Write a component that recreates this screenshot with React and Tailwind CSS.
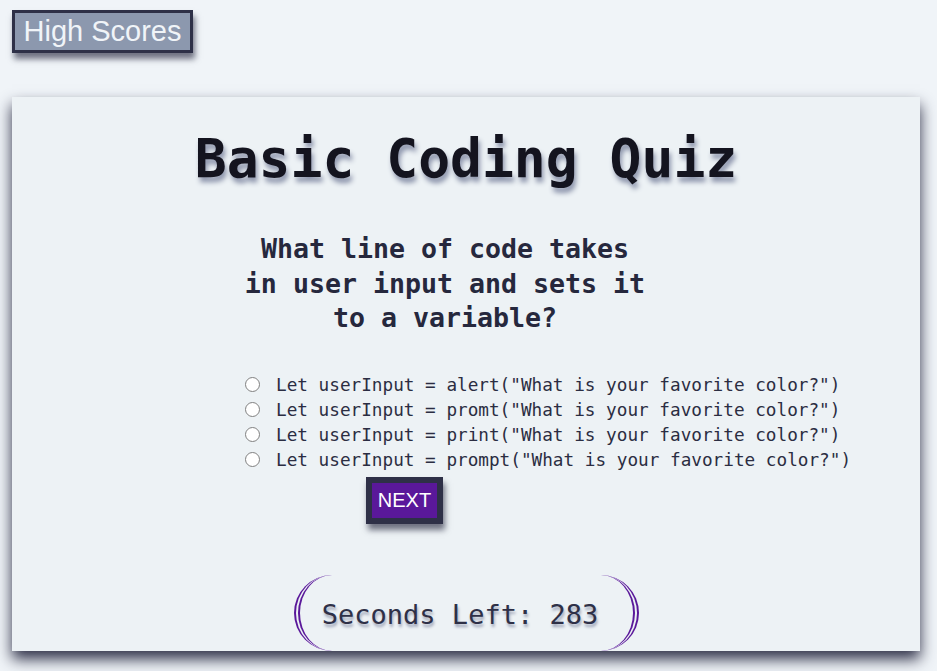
import { useState } from "react";

const options = [
  'Let userInput = alert("What is your favorite color?")',
  'Let userInput = promt("What is your favorite color?")',
  'Let userInput = print("What is your favorite color?")',
  'Let userInput = prompt("What is your favorite color?")',
];

export default function App() {
  const [selected, setSelected] = useState(null);

  return (
    <div className="min-h-screen bg-[#f0f4f8] pt-[10px] pl-[12px] pr-[17px] font-['DejaVu_Sans_Mono',monospace]">
      <button className="h-[43px] w-[181px] border-[3px] border-[#2e3047] bg-[#8c98ae] text-[29px] leading-[33px] text-[#f0f4f8] font-['Liberation_Sans',Arial,sans-serif] shadow-[2px_6px_6px_#2e3047aa]">
        High Scores
      </button>

      <div className="mt-[44px] h-[554px] bg-[#edf2f5] pt-[32px] shadow-[0_8px_14px_#2e3047]">
        <h1 className="text-center text-[53px] font-bold leading-[60px] text-[#14141f] [text-shadow:2px_5px_5px_#8e96ad]">
          Basic Coding Quiz
        </h1>

        <div className="pl-[221px] pt-[43px]">
          <h2 className="ml-[9px] w-[406px] text-center text-[26.6px] font-bold leading-[34.5px] text-[#26283d]">
            What line of code takes in user input and sets it to a variable?
          </h2>

          <div className="mt-[37px] pl-[12px]">
            {options.map((opt, idx) => (
              <label
                key={idx}
                className="flex h-[25px] items-center text-[17.7px] text-[#2b2d42]"
              >
                <input
                  type="radio"
                  name="answer"
                  checked={selected === idx}
                  onChange={() => setSelected(idx)}
                  className="mb-[2px] h-[15px] w-[15px] appearance-none rounded-full border border-[#808080] bg-white checked:border-[4px] checked:border-[#5a189a]"
                />
                <span className="ml-[16px]">{opt}</span>
              </label>
            ))}
          </div>

          <button className="ml-[133px] mt-[4px] h-[47px] w-[77px] border-[6px] border-[#2e3047] bg-[#5a189a] text-[20px] text-white font-['Liberation_Sans',Arial,sans-serif] shadow-[2px_6px_6px_#2e3047aa]">
            NEXT
          </button>
        </div>

        <div className="mt-[51px] flex justify-center">
          <div className="flex h-[76px] w-[345px] items-center justify-center rounded-full border-x-[6px] border-y-0 border-double border-[#5a189a] pr-[12px] pt-[5px] text-[27px] text-[#2e3047] [text-shadow:1px_3px_3px_#9aa1b5]">
            Seconds Left: 283
          </div>
        </div>
      </div>
    </div>
  );
}
